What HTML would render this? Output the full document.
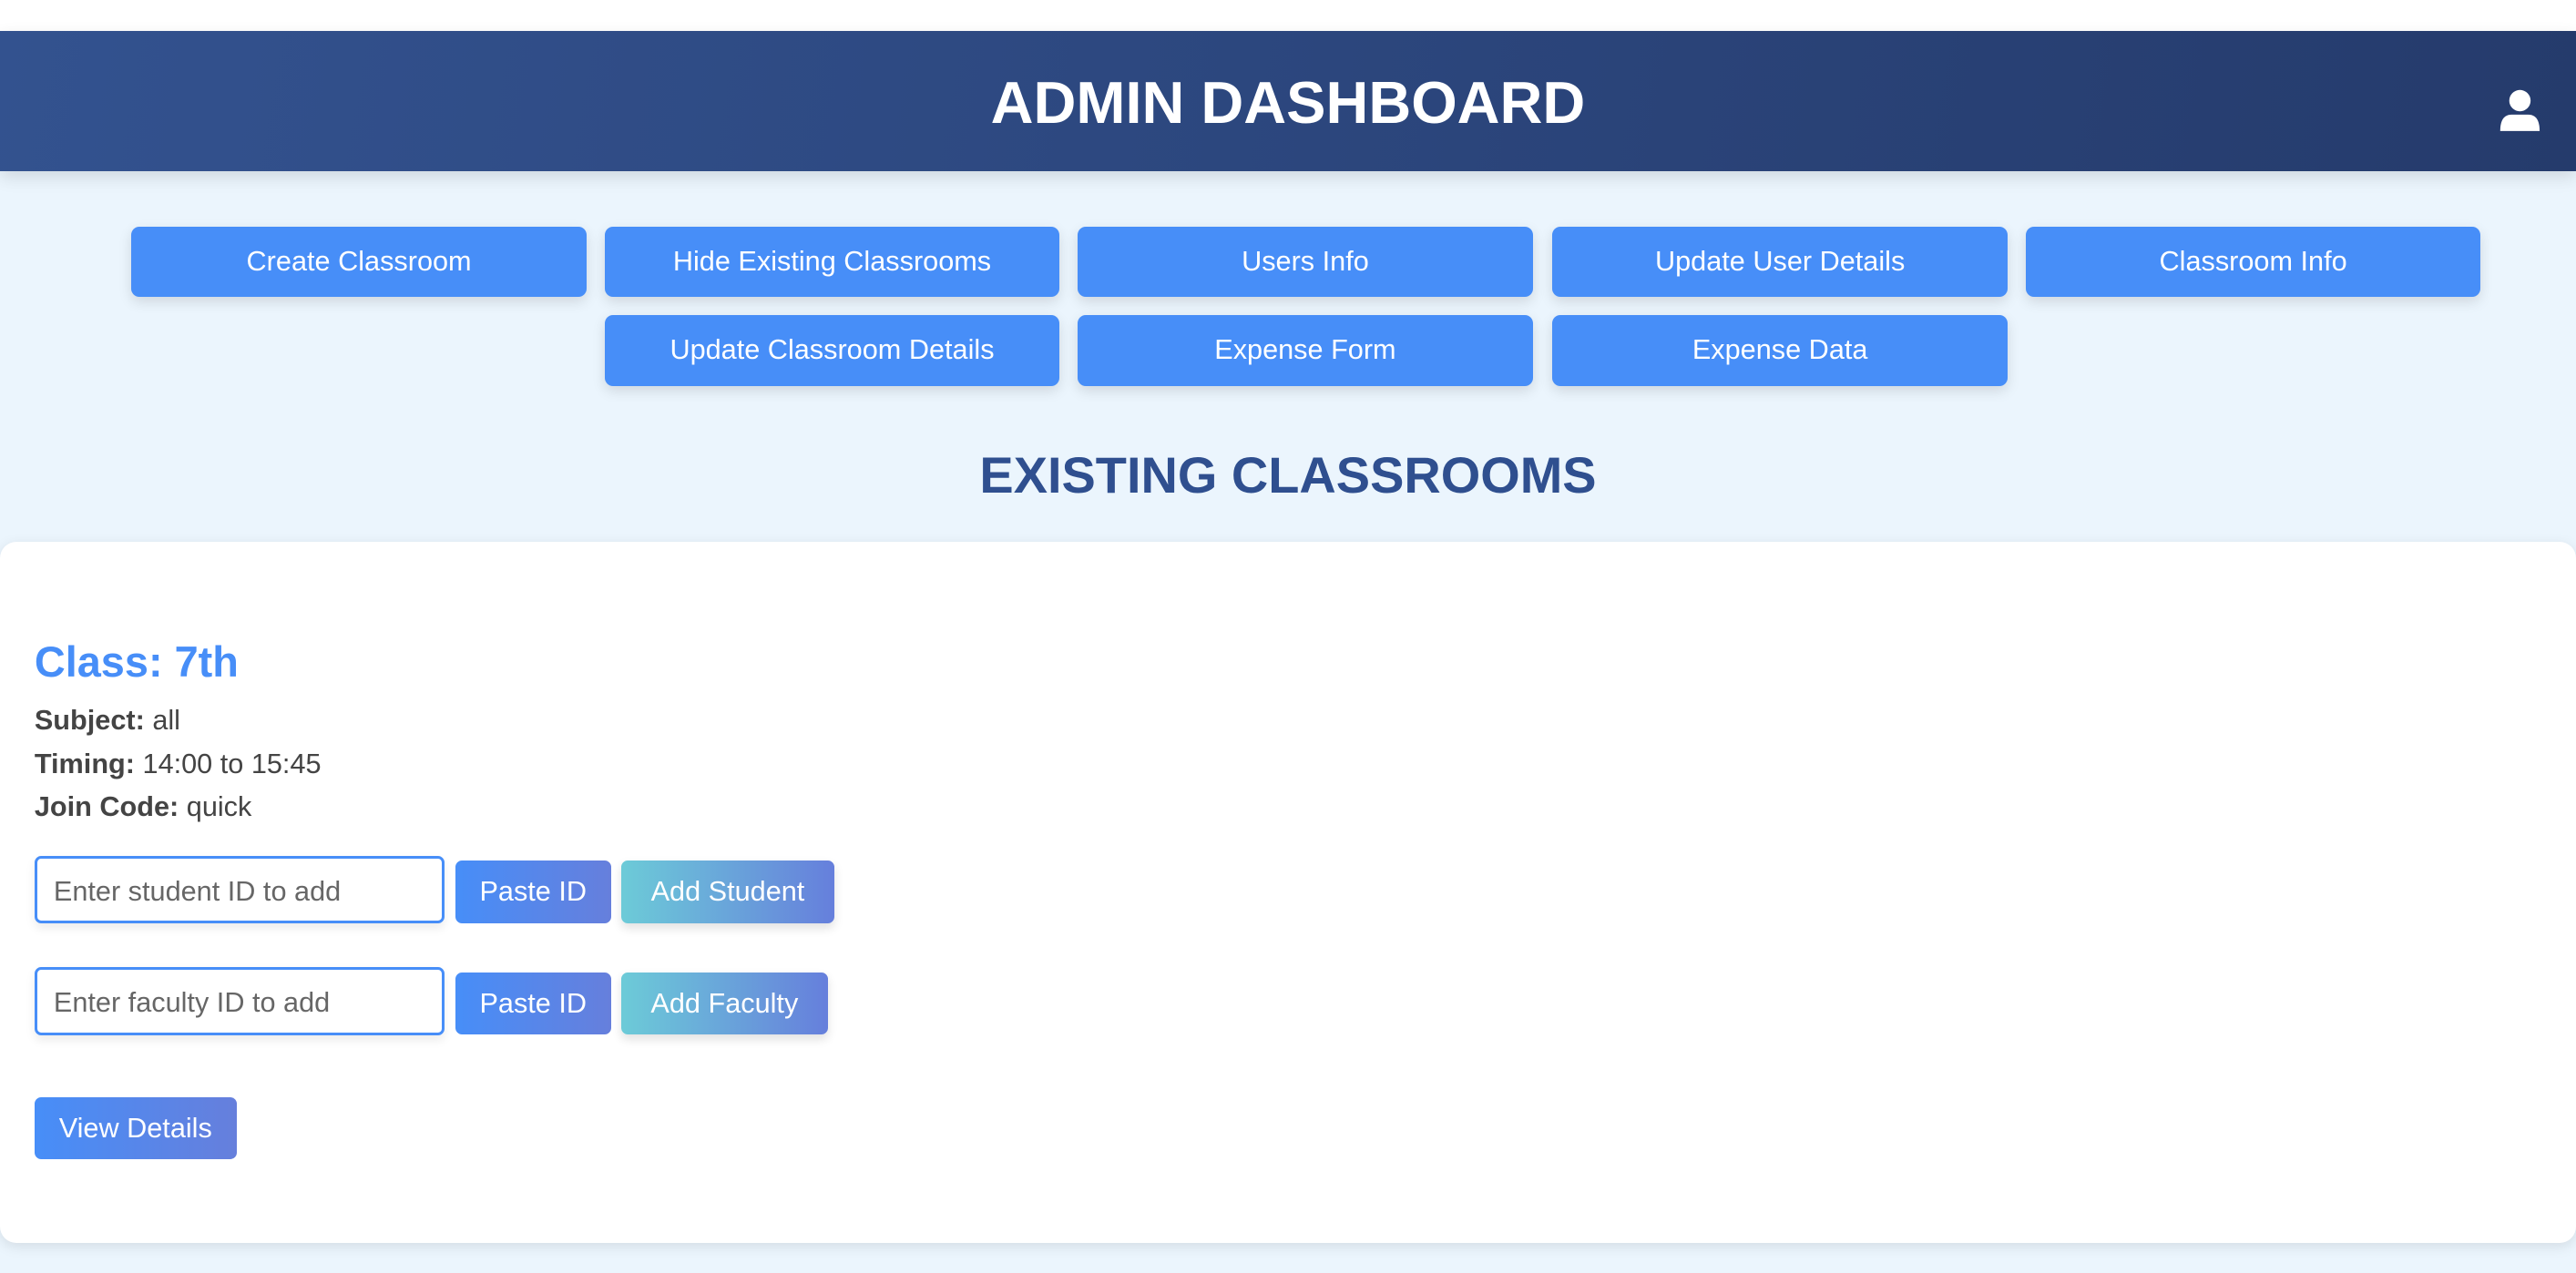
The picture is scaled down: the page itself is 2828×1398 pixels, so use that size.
<!DOCTYPE html>
<html><head><meta charset="utf-8"><style>
html,body{margin:0;padding:0}
body{width:1568px;height:775px;zoom:1.80357;background:#ebf5fd;font-family:"Liberation Sans",Arial,sans-serif;position:relative;overflow:hidden}
.top{position:absolute;left:0;top:0;width:1568px;height:19px;background:#fff}
.hdr{position:absolute;left:0;top:19px;width:1568px;height:85px;background:linear-gradient(100deg,#33528f,#253b6c);box-shadow:0 4px 10px rgba(0,0,0,.12)}
.hdr h1{margin:0;text-align:center;line-height:85px;color:#fff;font-size:36px;font-weight:bold;position:relative;top:1px}
.usr{position:absolute;left:1521px;top:35px}
.b{position:absolute;width:277px;height:43px;background:#478ef8;color:#fff;border-radius:5px;font-size:17px;text-align:center;line-height:43px;box-shadow:0 3px 8px rgba(0,0,0,.12)}
.st{position:absolute;left:0;width:1568px;top:271px;text-align:center;color:#2f4f8f;font-size:31px;font-weight:bold}
.card{position:absolute;left:0;top:330px;width:1568px;height:427px;background:#fff;border-radius:10px;box-shadow:0 2px 8px rgba(0,0,0,.1)}
.cls{position:absolute;left:21px;top:388px;color:#478ef8;font-size:26px;font-weight:bold}
.ln{position:absolute;left:21px;color:#444;font-size:17px}
.in{position:absolute;left:21px;width:246px;height:38px;border:2px solid #478ef8;border-radius:4px;color:#666;font-size:17px;line-height:40px;box-shadow:0 3px 6px rgba(0,0,0,.08)}
.in span{margin-left:10px}
.g{position:absolute;height:38px;line-height:38px;color:#fff;font-size:17px;text-align:center;border-radius:4px}
.p{background:linear-gradient(90deg,#478ef8,#667fdc)}
.a{background:linear-gradient(90deg,#6ccbd8,#667fdc);box-shadow:0 3px 6px rgba(0,0,0,.12)}
</style></head><body>
<div class="top"></div>
<div class="hdr"><h1>ADMIN DASHBOARD</h1>
<svg class="usr" width="26" height="28" viewBox="0 0 26 28"><circle cx="13" cy="7.5" r="6.5" fill="#fff"/><path d="M1 26 Q1 16 8 16 L18 16 Q25 16 25 26 Z" fill="#fff"/></svg></div>
<div class="b" style="left:80px;top:138px">Create Classroom</div>
<div class="b" style="left:368px;top:138px">Hide Existing Classrooms</div>
<div class="b" style="left:656px;top:138px">Users Info</div>
<div class="b" style="left:945px;top:138px">Update User Details</div>
<div class="b" style="left:1233px;top:138px">Classroom Info</div>
<div class="b" style="left:368px;top:192px">Update Classroom Details</div>
<div class="b" style="left:656px;top:192px">Expense Form</div>
<div class="b" style="left:945px;top:192px">Expense Data</div>
<div class="st">EXISTING CLASSROOMS</div>
<div class="card"></div>
<div class="cls">Class: 7th</div>
<div class="ln" style="top:429px"><b>Subject:</b> all</div>
<div class="ln" style="top:456px"><b>Timing:</b> 14:00 to 15:45</div>
<div class="ln" style="top:482px"><b>Join Code:</b> quick</div>
<div class="in" style="top:521px"><span>Enter student ID to add</span></div>
<div class="g p" style="left:277px;top:524px;width:95px">Paste ID</div>
<div class="g a" style="left:378px;top:524px;width:130px">Add Student</div>
<div class="in" style="top:589px"><span>Enter faculty ID to add</span></div>
<div class="g p" style="left:277px;top:592px;width:95px">Paste ID</div>
<div class="g a" style="left:378px;top:592px;width:126px">Add Faculty</div>
<div class="g p" style="left:21px;top:668px;width:123px">View Details</div>
</body></html>
